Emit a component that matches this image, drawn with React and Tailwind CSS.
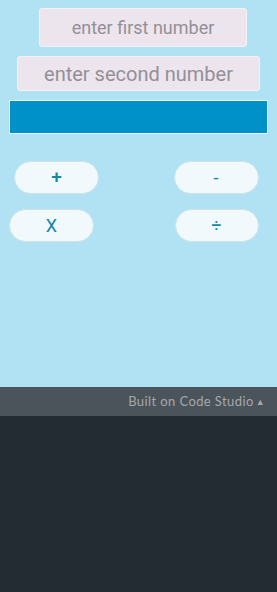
export default function App() {
  return (
    <div className="flex h-[592px] w-[277px] flex-col overflow-hidden bg-[#232b33] font-['Roboto',sans-serif]">
      <div className="h-[387px] bg-[#b1e2f3] pt-[8px]">
        <div className="flex flex-col items-start">
          <div className="ml-[39px] flex h-[39px] w-[208px] items-center justify-center rounded-[3px] border border-[#f6f1f6] bg-[#ede5ed] text-[18px] text-[#948f96]">
            enter first number
          </div>
          <div className="ml-[17px] mt-[9px] flex h-[35px] w-[243px] items-center justify-center rounded-[3px] border border-[#f6f1f6] bg-[#ede5ed] text-[20px] text-[#948f96]">
            enter second number
          </div>
          <div className="ml-[9px] mt-[9px] h-[34px] w-[259px] border border-[#eef8fc] bg-[#0191c9]" />
        </div>
        <div className="mt-[27px] grid grid-cols-2 gap-y-[15px]">
          <button className="ml-[14px] h-[33px] w-[85px] rounded-full border border-[#cde3ea] bg-[#f1f9fc] text-[19px] font-medium text-[#1586a8]">+</button>
          <button className="ml-[35px] h-[33px] w-[85px] rounded-full border border-[#cde3ea] bg-[#f1f9fc] text-[18px] text-[#1586a8]">-</button>
          <button className="ml-[9px] h-[33px] w-[85px] rounded-full border border-[#cde3ea] bg-[#f1f9fc] text-[18px] text-[#1586a8]">X</button>
          <button className="ml-[36px] h-[33px] w-[84px] rounded-full border border-[#cde3ea] bg-[#f1f9fc] text-[18px] text-[#1586a8]">÷</button>
        </div>
      </div>
      <div className="flex h-[29px] items-center justify-end bg-[#4b545b] pr-[12px] font-['Lato',sans-serif] text-[13px] tracking-[0.4px] text-[#a3a9ad]">
        Built on Code Studio
        <span className="ml-[2px] text-[9px]">▲</span>
      </div>
      <div className="flex-1 bg-[#232b33]" />
    </div>
  );
}
